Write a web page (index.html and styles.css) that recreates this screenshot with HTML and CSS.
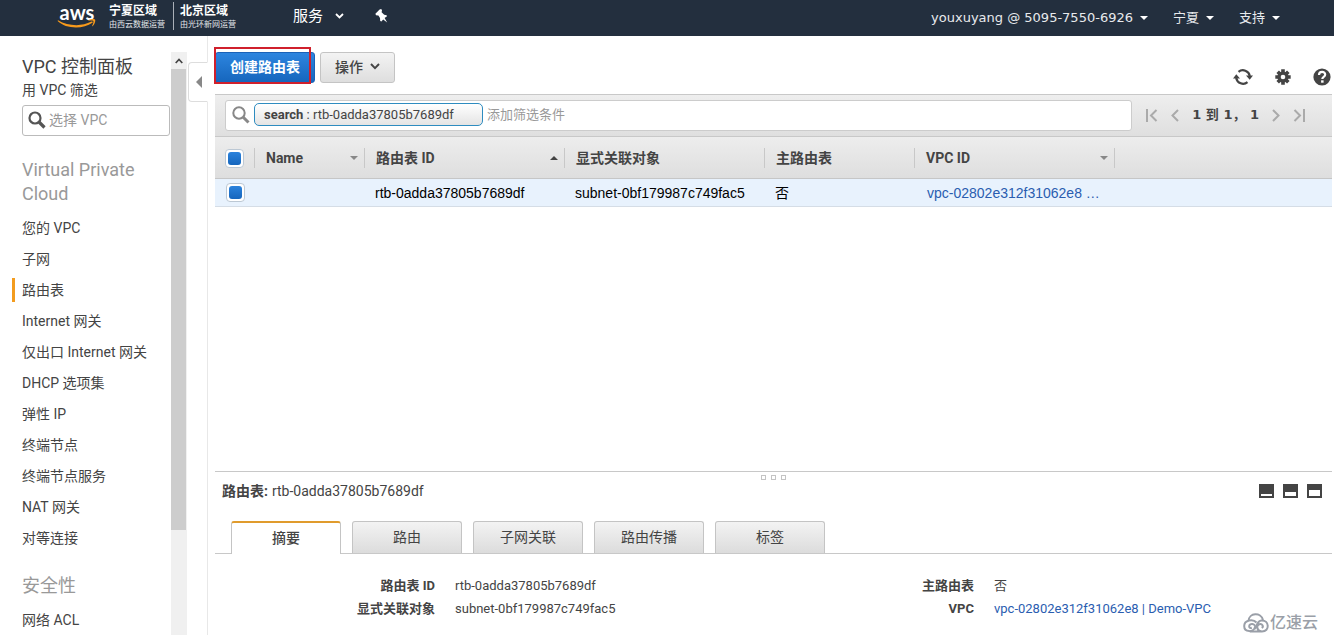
FILE: index.html
```html
<!DOCTYPE html>
<html lang="zh-CN">
<head>
<meta charset="utf-8">
<title>VPC 控制面板</title>
<link rel="stylesheet" href="styles.css">
</head>
<body>
<div class="app">
  <header class="topbar">
    <div class="brand">
      <div class="brand-logo">
        <span class="brand-name">aws</span>
        <svg class="brand-smile" viewBox="0 0 40 10" width="40" height="10" aria-hidden="true">
          <path d="M1 1.200C11 7 24 8 34.500 2.600c1-.5 1.800.5.9 1.200C26 10.400 9 10.200.6 2Z" fill="#f79a1c"/>
          <path d="M31.500.9c2.500-1 6-1 6.600-.2.600.9-.3 4.300-2.300 6.300-.4.400-.8.200-.6-.3.900-2.200 1.500-3.900 1.100-4.600-.4-.6-2.400-.6-4.500-.4-.5 0-.7-.5-.3-.8Z" fill="#f79a1c"/>
        </svg>
      </div>
      <div class="region"><strong>宁夏区域</strong><small>由西云数据运营</small></div>
      <div class="region region-second"><strong>北京区域</strong><small>由光环新网运营</small></div>
    </div>
    <nav class="topnav">
      <button class="top-button services" type="button">服务
        <svg width="9" height="6" viewBox="0 0 9 6" aria-hidden="true"><path d="M1 1l3.500 3.500L8 1" fill="none" stroke="#fff" stroke-width="1.800"/></svg>
      </button>
      <button class="top-button pin" type="button" aria-label="固定">
        <svg width="14" height="14" viewBox="0 0 14 14" aria-hidden="true"><path d="M4.600.4L6.200 0 7 1.200 6.600 3.200 9.200 5.800 11.600 6.200 12 7.200 9.600 9l2.600 4.600L8.200 10.600 6.400 12.400 5.200 12 5 9 3.400 6.400 1 6.200.4 4.800Z" fill="#fff"/></svg>
      </button>
    </nav>
    <div class="account">
      <button class="top-button" type="button">youxuyang @ 5095-7550-6926<i class="caret"></i></button>
      <button class="top-button" type="button">宁夏<i class="caret"></i></button>
      <button class="top-button" type="button">支持<i class="caret"></i></button>
    </div>
  </header>

  <div class="body">
    <aside class="sidebar">
      <h1 class="side-title">VPC 控制面板</h1>
      <label class="side-label" for="vpc-filter">用 VPC 筛选</label>
      <div class="vpc-box">
        <svg width="18" height="18" viewBox="0 0 18 18" aria-hidden="true"><circle cx="7" cy="7" r="5.500" fill="none" stroke="#555" stroke-width="2.200"/><path d="M11 11l5.500 5.500" stroke="#555" stroke-width="3.200"/></svg>
        <input id="vpc-filter" type="text" placeholder="选择 VPC">
      </div>
      <h2 class="side-heading">Virtual Private Cloud</h2>
      <ul class="side-list">
        <li><a href="#">您的 VPC</a></li>
        <li><a href="#">子网</a></li>
        <li class="active"><a href="#">路由表</a></li>
        <li><a href="#">Internet 网关</a></li>
        <li><a href="#">仅出口 Internet 网关</a></li>
        <li><a href="#">DHCP 选项集</a></li>
        <li><a href="#">弹性 IP</a></li>
        <li><a href="#">终端节点</a></li>
        <li><a href="#">终端节点服务</a></li>
        <li><a href="#">NAT 网关</a></li>
        <li><a href="#">对等连接</a></li>
      </ul>
      <h2 class="side-heading">安全性</h2>
      <ul class="side-list">
        <li><a href="#">网络 ACL</a></li>
      </ul>
    </aside>
    <div class="scrollbar" aria-hidden="true">
      <div class="scroll-up"><svg width="8" height="6" viewBox="0 0 8 6"><path d="M.7 5L4 1.500 7.300 5" fill="none" stroke="#444" stroke-width="1.700"/></svg></div>
      <div class="scroll-thumb"></div>
    </div>
    <div class="gutter">
      <button class="collapse" type="button" aria-label="折叠"><svg width="6" height="12" viewBox="0 0 6 12" aria-hidden="true"><path d="M6 0v12L0 6Z" fill="#888"/></svg></button>
    </div>

    <main class="main">
      <div class="toolbar">
        <div class="marked"><button class="button primary" type="button">创建路由表</button></div>
        <button class="button" type="button">操作
          <svg width="10" height="7" viewBox="0 0 10 7" aria-hidden="true"><path d="M1 1l4 4.200L9 1" fill="none" stroke="#444" stroke-width="1.900"/></svg>
        </button>
        <div class="tools">
          <button class="icon-button" type="button" aria-label="刷新">
            <svg width="20" height="18" viewBox="0 0 20 18" aria-hidden="true"><path d="M5.500 3.800A7 7 0 0 1 16.800 8M14.500 14.200A7 7 0 0 1 3.200 10" fill="none" stroke="#444" stroke-width="2.200"/><path d="M13 7.500h7l-3.300 4.300ZM0 10.500h7L3.300 6.200Z" fill="#444"/></svg>
          </button>
          <button class="icon-button" type="button" aria-label="设置">
            <svg width="16" height="16" viewBox="0 0 16 16" aria-hidden="true"><g stroke="#444" stroke-width="3.600"><path d="M8 .3v15.400M.3 8h15.400M2.700 2.700l10.600 10.600M13.300 2.700L2.700 13.300"/></g><circle cx="8" cy="8" r="5.600" fill="#444"/><circle cx="8" cy="8" r="2.300" fill="#fff"/></svg>
          </button>
          <button class="icon-button" type="button" aria-label="帮助">
            <svg width="18" height="18" viewBox="0 0 18 18" aria-hidden="true"><circle cx="9" cy="9" r="8.600" fill="#444"/><path d="M6 7c0-4.200 6.300-4 6.200-.4C12.200 9 9.300 8.800 9.300 11" fill="none" stroke="#fff" stroke-width="2.200"/><path d="M8.100 12.300h2.500v2.400H8.100Z" fill="#fff"/></svg>
          </button>
        </div>
      </div>

      <div class="filterbar">
        <div class="search">
          <svg width="18" height="18" viewBox="0 0 18 18" aria-hidden="true"><circle cx="7" cy="7" r="5.700" fill="none" stroke="#888" stroke-width="2"/><path d="M11 11l5.500 5.500" stroke="#888" stroke-width="3"/></svg>
          <span class="token"><b>search</b> : rtb-0adda37805b7689df</span>
          <input type="text" aria-label="添加筛选条件" placeholder="添加筛选条件">
        </div>
        <div class="pager">
          <button type="button" aria-label="第一页"><svg width="12" height="13" viewBox="0 0 12 13"><path d="M1 0v13M10.500 1L5 6.500l5.500 5.500"/></svg></button>
          <button type="button" aria-label="上一页"><svg width="8" height="13" viewBox="0 0 8 13"><path d="M7 1L1.500 6.500 7 12"/></svg></button>
          <span class="range">1 到 1， 1</span>
          <button type="button" aria-label="下一页"><svg width="8" height="13" viewBox="0 0 8 13"><path d="M1 1l5.500 5.500L1 12"/></svg></button>
          <button type="button" aria-label="最后一页"><svg width="12" height="13" viewBox="0 0 12 13"><path d="M11 0v13M1.500 1L7 6.500 1.500 12"/></svg></button>
        </div>
      </div>

      <table class="grid">
        <colgroup><col class="c-check"><col class="c-name"><col class="c-wide"><col class="c-wide"><col class="c-main"><col class="c-wide"><col></colgroup>
        <thead>
          <tr>
            <th><div class="head head-check"><input class="check" type="checkbox" checked aria-label="全选"></div></th>
            <th><div class="head">Name<i class="sort"></i></div></th>
            <th><div class="head">路由表 ID<i class="sort up"></i></div></th>
            <th><div class="head">显式关联对象</div></th>
            <th><div class="head">主路由表</div></th>
            <th><div class="head">VPC ID<i class="sort"></i></div></th>
            <th></th>
          </tr>
        </thead>
        <tbody>
          <tr>
            <td><input class="check" type="checkbox" checked aria-label="选择 rtb-0adda37805b7689df"></td>
            <td></td>
            <td>rtb-0adda37805b7689df</td>
            <td>subnet-0bf179987c749fac5</td>
            <td>否</td>
            <td class="link-cell"><a href="#">vpc-02802e312f31062e8 …</a></td>
            <td></td>
          </tr>
        </tbody>
      </table>

      <section class="details">
        <div class="grip" aria-hidden="true"><i></i><i></i><i></i></div>
        <div class="details-head">
          <div class="details-title"><b>路由表:</b><span>rtb-0adda37805b7689df</span></div>
          <div class="panes">
            <button class="pane pane-low" type="button" aria-label="最小化"></button>
            <button class="pane pane-mid" type="button" aria-label="半屏"></button>
            <button class="pane pane-high" type="button" aria-label="最大化"></button>
          </div>
        </div>
        <div class="tabs" role="tablist">
          <button class="tab selected" type="button" role="tab" aria-selected="true">摘要</button>
          <button class="tab" type="button" role="tab">路由</button>
          <button class="tab" type="button" role="tab">子网关联</button>
          <button class="tab" type="button" role="tab">路由传播</button>
          <button class="tab" type="button" role="tab">标签</button>
        </div>
        <div class="facts">
          <dl>
            <dt>路由表 ID</dt><dd>rtb-0adda37805b7689df</dd>
            <dt>显式关联对象</dt><dd>subnet-0bf179987c749fac5</dd>
          </dl>
          <dl>
            <dt>主路由表</dt><dd>否</dd>
            <dt>VPC</dt><dd><a href="#">vpc-02802e312f31062e8 | Demo-VPC</a></dd>
          </dl>
        </div>
      </section>
    </main>
  </div>
  <div class="watermark">
    <svg width="26" height="20" viewBox="0 0 26 20" aria-hidden="true"><g fill="none" stroke="#9a9fa8" stroke-width="2"><path d="M5.500 8C6-.5 18-1 20 7"/><path d="M13.500 9.500C10 5.500 1.200 7 1.200 13c0 6.500 9.800 6.800 10.800 1 .5-3.500-5.500-4.300-5.800-.8-.1 1.600 1.300 2.100 2.600 1.600"/><path d="M11.500 16C14 14 13.500 8 18.500 7.500c8-.3 8.500 11 .5 11-5 0-6.300-6-2.700-7.200 3-.9 4.700 2.200 2.500 3.700M7 18.500h12"/></g></svg>
    <span>亿速云</span>
  </div>
</div>
</body>
</html>
```
FILE: styles.css
```css
* { box-sizing: border-box; }
body {
  margin: 0;
  background: #fff;
  color: #444;
  font: 14px/20px Roboto, "Noto Sans CJK SC", sans-serif;
}
button, input { font: inherit; color: inherit; }
button { margin: 0; padding: 0; border: 0; background: none; white-space: nowrap; }
a { color: inherit; text-decoration: none; }
svg { display: block; flex: none; }
.app { position: relative; display: flex; flex-direction: column; height: 100vh; overflow: hidden; }

/* Top bar */
.topbar {
  display: flex;
  align-items: center;
  flex: none;
  height: 36px;
  padding: 0 54px 0 57px;
  background: #232f3e;
  color: #fff;
}
.brand { display: flex; height: 28px; margin-bottom: 4px; }
.brand-logo { width: 40px; margin-right: 12px; }
.brand-name {
  display: block;
  height: 17px;
  font: 700 20px/20px Lato, sans-serif;
  text-align: center;
}
.region { display: flex; flex-direction: column; width: 64px; padding-top: 2px; }
.region-second { padding-left: 6px; width: 70px; border-left: 1px solid #aab0b8; }
.region strong { font-size: 12px; line-height: 14px; }
.region small { font-size: 8px; line-height: 13px; white-space: nowrap; color: #e4e7ea; }
.topnav { display: flex; align-items: center; gap: 31px; margin: 0 auto 4px 50px; }
.top-button { display: flex; align-items: center; }
.services { gap: 12px; font-size: 15px; }
.account { display: flex; gap: 25px; font: 13px/20px "DejaVu Sans", "Noto Sans CJK SC", sans-serif; color: #e8eaed; }
.caret { margin-left: 7px; border: 4px solid transparent; border-top-color: #fff; border-bottom: 0; }

/* Sidebar */
.body { display: flex; flex: 1; min-height: 0; }
.sidebar { flex: none; width: 171px; padding: 18px 1px 0 22px; overflow: hidden; }
.side-title { margin: 0; font-size: 18px; line-height: 26px; font-weight: 400; }
.side-label { display: block; line-height: 20px; margin-bottom: 5px; }
.vpc-box {
  display: flex;
  align-items: center;
  gap: 3px;
  height: 31px;
  padding: 0 5px 1px;
  border: 1px solid #bbb;
  border-radius: 3px;
}
.vpc-box input, .search input { flex: 1; min-width: 0; border: 0; padding: 0; background: none; outline: 0; }
.vpc-box input::placeholder, .search input::placeholder { color: #999; opacity: 1; }
.side-heading { margin: 22px 0 6px; font-size: 18px; line-height: 24px; font-weight: 400; color: #999; }
.side-list { margin: 0; padding: 0; list-style: none; }
.side-list li { height: 31px; padding: 4px 0 3px; white-space: nowrap; }
.side-list a { display: block; line-height: 24px; }
.side-list .active a { margin-left: -10px; padding-left: 7px; border-left: 3px solid #f39c1f; }
.side-list + .side-heading { margin: 21px 0 6px; }
.scrollbar { flex: none; width: 16px; margin-top: 16px; background: #f0f0f0; }
.scroll-up { display: grid; place-items: center; height: 17px; }
.scroll-thumb { width: 15px; height: 79%; background: #cdcdcd; }
.gutter { flex: none; width: 21px; padding: 26px 0 0 1px; border-right: 1px solid #e8e8e8; }
.collapse {
  display: flex;
  align-items: center;
  width: 20px;
  height: 40px;
  padding-left: 7px;
  border: 1px solid #ddd;
  border-right-color: #fff;
  border-radius: 4px 0 0 4px;
  background: #fff;
}

/* Toolbar */
.main { display: flex; flex-direction: column; flex: 1; min-width: 0; margin: 0 2px 0 7px; }
.toolbar { display: flex; align-items: flex-start; flex: none; gap: 5px; height: 58px; padding-top: 16px; }
.button {
  display: flex;
  align-items: center;
  gap: 7px;
  height: 31px;
  padding: 0 14px 2px;
  border: 1px solid #c4c4c4;
  border-radius: 3px;
  background: linear-gradient(#f3f3f3, #dedede);
  font-weight: 500;
}
.primary { border-color: #1a62b8; background: linear-gradient(#2d85df, #1666bd); color: #fff; font-weight: 700; }
.marked { position: relative; }
.marked::after {
  content: "";
  position: absolute;
  inset: -5px 4px -1px -1px;
  border: 2px solid #d0202c;
  pointer-events: none;
}
.tools { display: flex; align-items: center; gap: 22px; height: 50px; margin: 0 1px 0 auto; }

/* Filter bar */
.filterbar {
  display: flex;
  align-items: center;
  flex: none;
  gap: 14px;
  height: 43px;
  padding: 0 27px 1px 10px;
  border-top: 1px solid #c8c8c8;
  border-bottom: 1px solid #c8c8c8;
  background: linear-gradient(#eee, #dfdfdf);
}
.search {
  display: flex;
  align-items: center;
  flex: 1;
  gap: 4px;
  height: 31px;
  padding: 0 6px 1px;
  border: 1px solid #ccc;
  border-radius: 3px;
  background: #fff;
}
.token {
  width: 229px;
  padding: 0 9px;
  border: 1px solid #2e8cc0;
  border-radius: 5px;
  background: linear-gradient(#fff, #e4e4e4);
  font-size: 13px;
  line-height: 21px;
  white-space: nowrap;
}
.search input { font-size: 13px; }
.pager { display: flex; align-items: center; gap: 13px; }
.pager path { fill: none; stroke: #aaa; stroke-width: 2; }
.range { font: bold 13px/20px "DejaVu Sans", "Noto Sans CJK SC", sans-serif; white-space: nowrap; }

/* Route table list */
.grid { width: 100%; flex: none; table-layout: fixed; border-collapse: collapse; }
.c-check { width: 40px; }
.c-name { width: 110px; }
.c-wide { width: 200px; }
.c-main { width: 150px; }
.grid th { height: 41px; padding: 2px 0 0; background: linear-gradient(#ededed, #dedede); border-bottom: 1px solid #c6c6c6; }
.head {
  display: flex;
  align-items: center;
  justify-content: space-between;
  height: 20px;
  padding: 0 6px 0 11px;
  border-right: 1px solid #c8c8c8;
  box-shadow: 1px 0 #fff;
}
.sort { border: 4px solid transparent; border-top-color: #888; border-bottom: 0; }
.sort.up { border-top: 0; border-bottom: 4px solid #444; }
.grid td {
  height: 28px;
  padding: 1px 0 0 10px;
  border-bottom: 1px solid #d5dde6;
  background: #e8f2fd;
  color: #000;
  font-family: "Liberation Sans", "Noto Sans CJK SC", sans-serif;
  white-space: nowrap;
}
.grid td:first-child { padding: 0 0 0 11px; }
.grid .link-cell { padding-left: 12px; }
.link-cell a, .facts a { color: #2a5db0; }
.check {
  appearance: none;
  display: block;
  width: 19px;
  height: 19px;
  margin: 0;
  padding: 2px;
  border: 1px solid #bcc8d4;
  border-radius: 4px;
  background: #fff;
}
.check:checked::before {
  content: "";
  display: block;
  height: 13px;
  border-radius: 3px;
  background: linear-gradient(#2b82dc, #1666bd);
}
.head-check { padding-left: 10px; }

/* Details */
.details { flex: none; height: 164px; margin-top: auto; border-top: 1px solid #c8c8c8; }
.grip { display: flex; justify-content: center; gap: 5px; height: 9px; padding-top: 3px; }
.grip i { width: 5px; height: 5px; border: 1px solid #c4c4c4; }
.details-head { display: flex; justify-content: space-between; padding: 0 10px 0 7px; }
.details-title { display: flex; gap: 4px; }
.panes { display: flex; align-items: center; gap: 9px; }
.pane { width: 15px; height: 14px; border: 2px solid #444; background: #fff; }
.pane-low { border-top-width: 10px; }
.pane-mid { border-top-width: 8px; }
.pane-high { border-top-width: 6px; }
.tabs { display: flex; gap: 11px; margin-top: 20px; padding-left: 16px; border-bottom: 1px solid #c8c8c8; }
.tab {
  width: 110px;
  height: 32px;
  padding-bottom: 2px;
  border: 1px solid #c4c4c4;
  border-bottom: 0;
  border-radius: 3px 3px 0 0;
  background: linear-gradient(#f3f3f3, #dcdcdc);
}
.selected { height: 33px; margin-bottom: -1px; border-top: 2px solid #e09b2d; background: #fff; font-weight: 500; }
.facts { display: grid; grid-template-columns: 1fr 1fr; padding: 20px 39px 0 0; font-size: 13px; }
.facts dl { display: grid; grid-template-columns: 220px 1fr; column-gap: 20px; margin: 0; line-height: 23px; }
.facts dt { font-weight: 700; text-align: right; }
.facts dd { margin: 0; white-space: nowrap; }

/* Watermark over the page corner */
.watermark {
  position: absolute;
  right: 16px;
  bottom: 2px;
  display: flex;
  align-items: center;
  gap: 1px;
  color: #9a9fa8;
  font-size: 16px;
  font-weight: 500;
}
```
